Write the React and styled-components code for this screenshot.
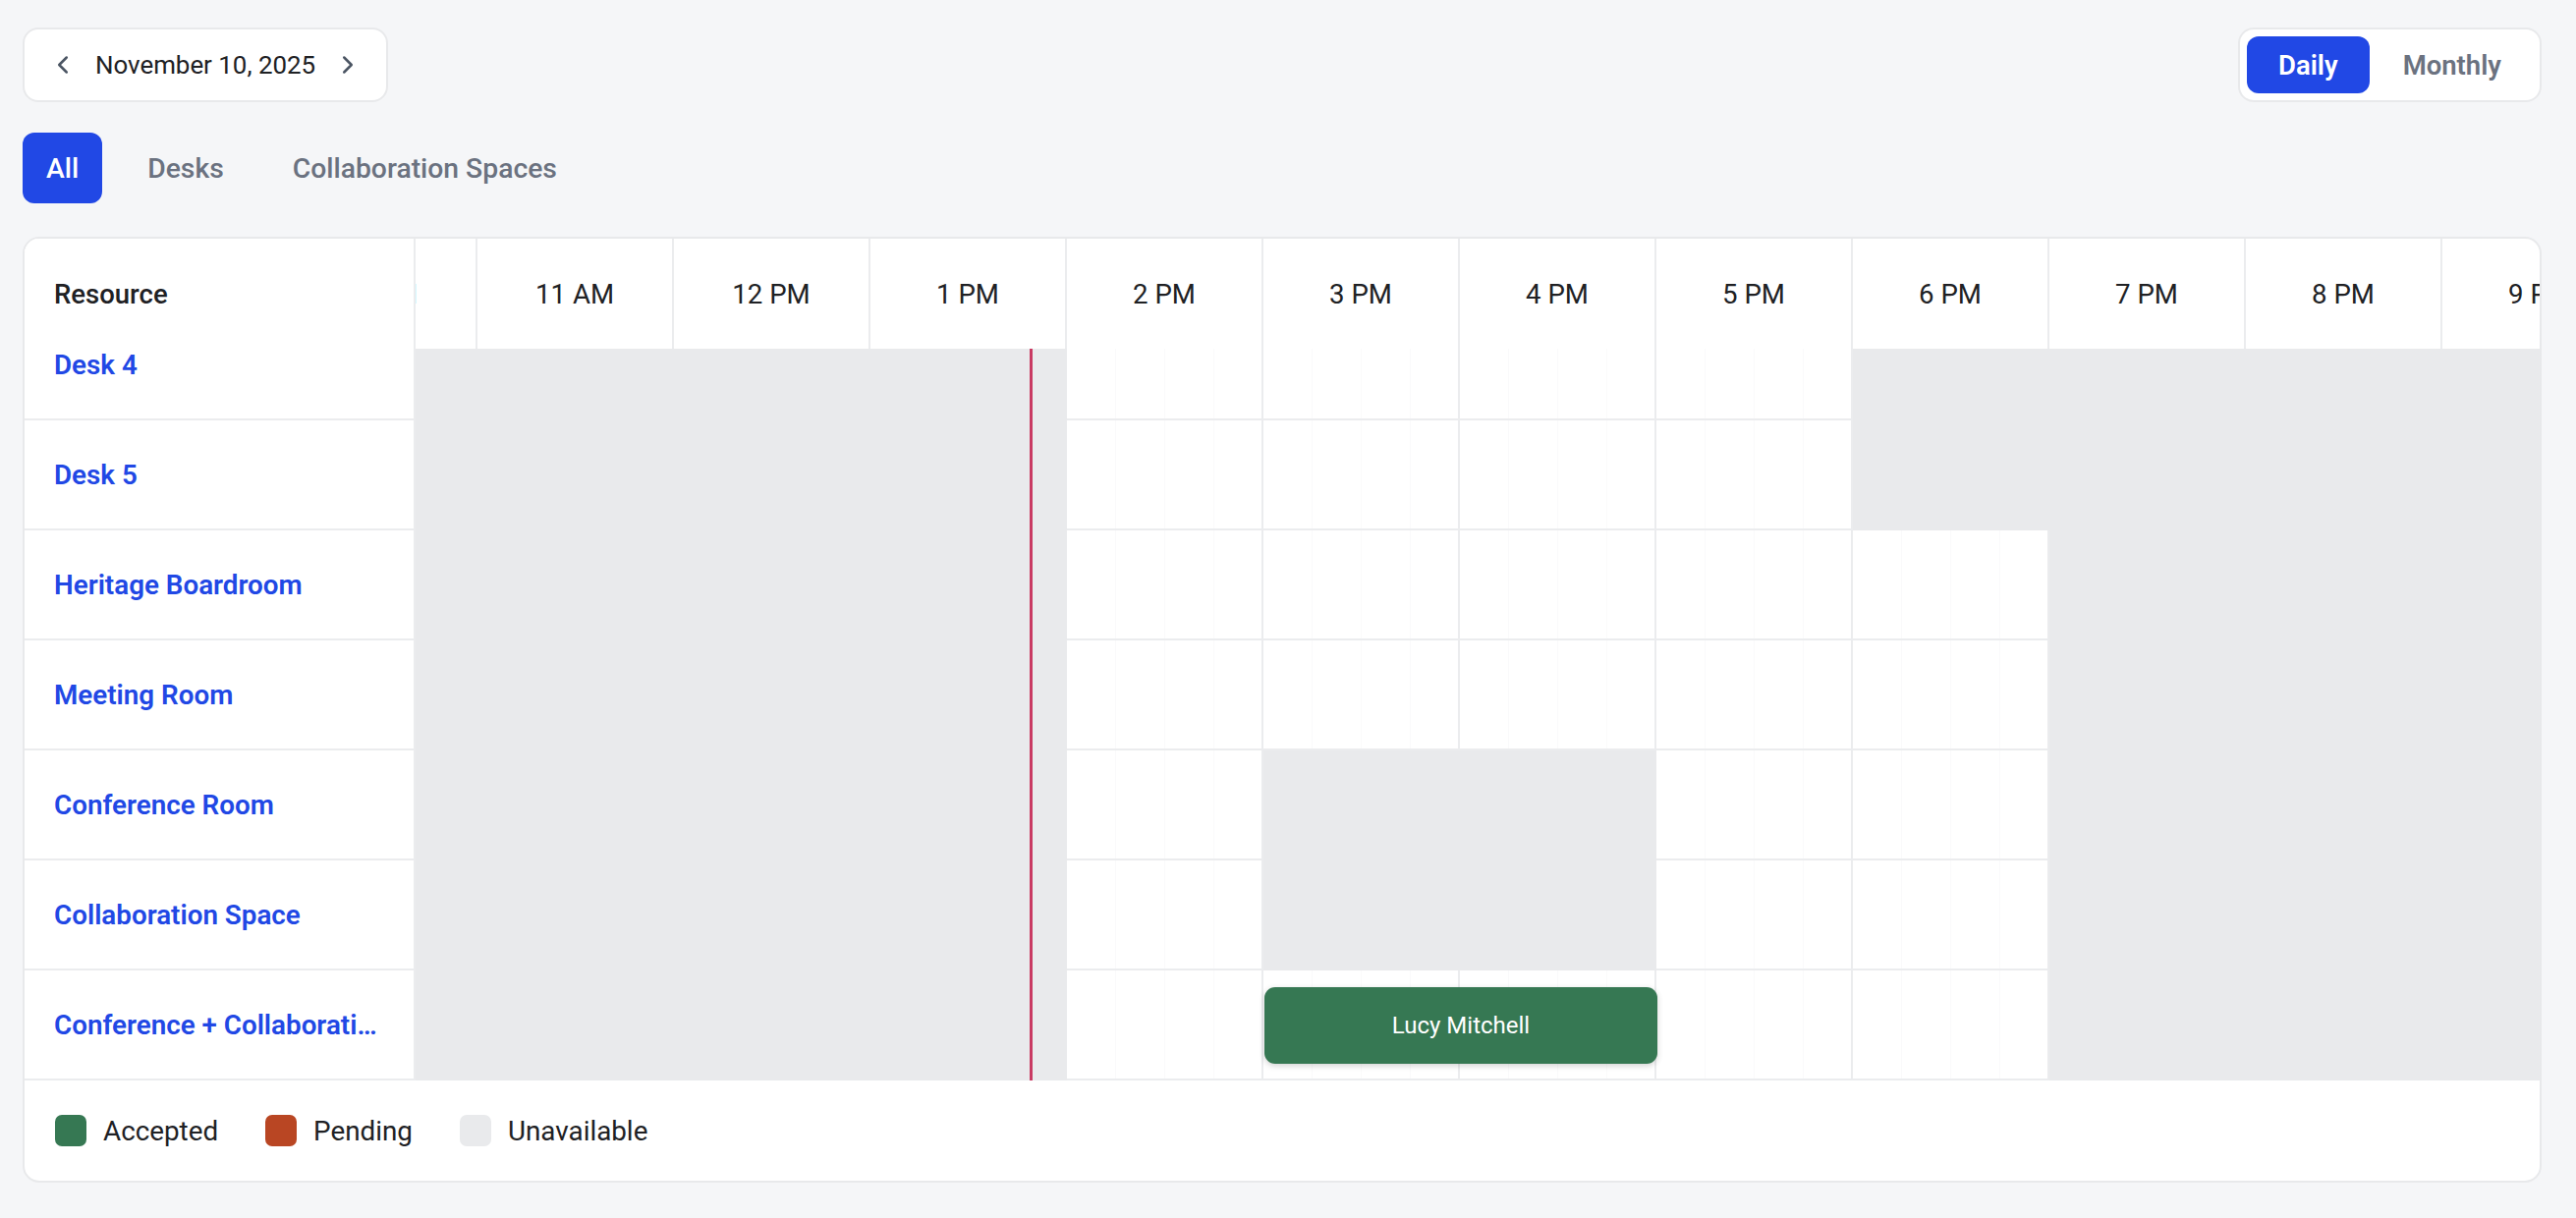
import React, { useLayoutEffect, useRef } from "react";
import styled, { createGlobalStyle } from "styled-components";
import { ChevronLeft, ChevronRight } from "lucide-react";

const HOUR_W = 200;
const NAME_W = 398;
const HEAD_H = 112;
const ROW_H = 112;
const HOURS = Array.from({ length: 24 }, (_, i) => i);
const NOW = 13 + 49 / 60;

const COLORS = {
  blue: "#2148e5",
  gray: "#e9eaec",
  line: "#ebecee",
  text: "#202124",
  muted: "#6b7280",
  green: "#367853",
  orange: "#b94623",
  now: "#c93b63",
};

const Global = createGlobalStyle`
  html, body { margin: 0; padding: 0; background: #f5f6f8; }
  body { font-family: Roboto, "Noto Sans", Arial, sans-serif; color: ${COLORS.text}; }
  * { box-sizing: border-box; }
`;

const Page = styled.div`
  height: 100vh;
  display: flex;
  flex-direction: column;
  padding: 28px 35px 36px 23px;
`;

const Toolbar = styled.div`
  display: flex;
  align-items: center;
  justify-content: space-between;
  height: 76px;
`;

const DateBox = styled.div`
  display: inline-flex;
  align-items: center;
  gap: 18px;
  height: 76px;
  padding: 0 24px;
  background: #fff;
  border: 2px solid #e8e9eb;
  border-radius: 16px;
`;

const IconBtn = styled.button`
  display: flex;
  align-items: center;
  justify-content: center;
  width: 30px;
  height: 30px;
  padding: 0;
  border: 0;
  background: none;
  color: #4b5563;
`;

const DateText = styled.span`
  font-size: 25.9px;
  font-weight: 400;
  color: ${COLORS.text};
  white-space: nowrap;
`;

const Toggle = styled.div`
  display: inline-flex;
  align-items: center;
  gap: 2px;
  height: 76px;
  padding: 7px;
  background: #fff;
  border: 2px solid #e8e9eb;
  border-radius: 16px;
`;

const ToggleBtn = styled.button`
  height: 58px;
  padding: 0 32px;
  border: 0;
  border-radius: 12px;
  font-family: inherit;
  font-size: 27.5px;
  font-weight: 600;
  background: ${(p) => (p.$active ? COLORS.blue : "transparent")};
  color: ${(p) => (p.$active ? "#fff" : COLORS.muted)};
`;

const Tabs = styled.div`
  display: flex;
  gap: 22px;
  margin-top: 31px;
`;

const Tab = styled.button`
  height: 72px;
  padding: 0 24px;
  border: 0;
  border-radius: 12px;
  font-family: inherit;
  font-size: 28.3px;
  font-weight: 500;
  background: ${(p) => (p.$active ? COLORS.blue : "transparent")};
  color: ${(p) => (p.$active ? "#fff" : COLORS.muted)};
`;

const Card = styled.div`
  flex: 1;
  min-height: 0;
  margin-top: 34px;
  display: flex;
  flex-direction: column;
  background: #fff;
  border: 2px solid #e8e9eb;
  border-radius: 17px;
  overflow: hidden;
`;

const Scroller = styled.div`
  flex: 1;
  min-height: 0;
  overflow: auto;
  scrollbar-width: none;
  &::-webkit-scrollbar { display: none; }
`;

const Grid = styled.div`
  width: ${NAME_W + HOURS.length * HOUR_W}px;
`;

const HeaderRow = styled.div`
  position: sticky;
  top: 0;
  z-index: 3;
  display: flex;
  height: ${HEAD_H}px;
  background: #fff;
`;

const Corner = styled.div`
  position: sticky;
  left: 0;
  z-index: 4;
  flex: none;
  width: ${NAME_W}px;
  display: flex;
  align-items: center;
  padding: 0 30px;
  background: #fff;
  border-right: 2px solid ${COLORS.line};
  font-size: 27.5px;
  font-weight: 500;
`;

const HourHead = styled.div`
  flex: none;
  width: ${HOUR_W}px;
  display: flex;
  align-items: center;
  justify-content: center;
  border-right: 2px solid ${COLORS.line};
  font-size: 27.6px;
  white-space: nowrap;
`;

const Body = styled.div`
  position: relative;
`;

const Row = styled.div`
  display: flex;
  height: ${ROW_H}px;
`;

const NameCell = styled.div`
  position: sticky;
  left: 0;
  z-index: 2;
  flex: none;
  width: ${NAME_W}px;
  min-width: 0;
  display: flex;
  align-items: center;
  padding: 0 30px;
  background: #fff;
  border-right: 2px solid ${COLORS.line};
  border-bottom: 2px solid ${COLORS.line};
`;

const NameLink = styled.a`
  min-width: 0;
  color: ${COLORS.blue};
  font-size: 27.8px;
  font-weight: 600;
  text-decoration: none;
  white-space: nowrap;
  overflow: hidden;
  text-overflow: ellipsis;
`;

const Track = styled.div`
  position: relative;
  display: flex;
`;

const Slot = styled.div`
  flex: none;
  width: ${HOUR_W}px;
  height: ${ROW_H}px;
  border-right: 2px solid ${(p) => (p.$off ? COLORS.gray : COLORS.line)};
  border-bottom: 2px solid ${(p) => (p.$off ? COLORS.gray : COLORS.line)};
  background-color: ${(p) => (p.$off ? COLORS.gray : "#fff")};
  background-image: ${(p) =>
    p.$off
      ? "none"
      : "repeating-linear-gradient(to right, transparent 0 49px, #fafafb 49px 50px)"};
`;

const Booking = styled.div`
  position: absolute;
  top: 17px;
  height: 78px;
  z-index: 1;
  display: flex;
  align-items: center;
  justify-content: center;
  border-radius: 11px;
  background: ${(p) => (p.$status === "pending" ? COLORS.orange : COLORS.green)};
  color: #fff;
  font-size: 24px;
  font-weight: 400;
  box-shadow: 0 2px 6px rgba(0, 0, 0, 0.18);
`;

const NowLine = styled.div`
  position: absolute;
  top: 0;
  bottom: 0;
  width: 3px;
  z-index: 1;
  background: ${COLORS.now};
`;

const Legend = styled.div`
  flex: 0 0 102px;
  display: flex;
  align-items: center;
  gap: 48px;
  padding: 0 31px;
`;

const LegendItem = styled.div`
  display: flex;
  align-items: center;
  gap: 17px;
  font-size: 27.8px;
  color: ${COLORS.text};
`;

const Swatch = styled.span`
  width: 32px;
  height: 32px;
  border-radius: 7px;
  background: ${(p) => p.$color};
`;

const fmt = (h) => {
  const suffix = h < 12 ? "AM" : "PM";
  const v = h % 12 === 0 ? 12 : h % 12;
  return `${v} ${suffix}`;
};

const DESK_OPEN = [14, 18];
const SPACE_OPEN = [14, 19];

const resources = [
  { name: "Desk 1", open: DESK_OPEN },
  { name: "Desk 2", open: DESK_OPEN },
  { name: "Desk 3", open: DESK_OPEN },
  { name: "Desk 4", open: DESK_OPEN },
  { name: "Desk 5", open: DESK_OPEN },
  { name: "Heritage Boardroom", open: SPACE_OPEN },
  { name: "Meeting Room", open: SPACE_OPEN },
  { name: "Conference Room", open: SPACE_OPEN, blocked: [15, 17] },
  { name: "Collaboration Space", open: SPACE_OPEN, blocked: [15, 17] },
  {
    name: "Conference + Collaboration Space",
    open: SPACE_OPEN,
    booking: { from: 15, to: 17, who: "Lucy Mitchell", status: "accepted" },
  },
];

const isOff = (r, h) => {
  if (h < r.open[0] || h >= r.open[1]) return true;
  if (r.blocked && h >= r.blocked[0] && h < r.blocked[1]) return true;
  return false;
};

export default function App() {
  const scroller = useRef(null);

  useLayoutEffect(() => {
    const el = scroller.current;
    if (el) {
      el.scrollLeft = 2137;
      el.scrollTop = el.scrollHeight;
    }
  }, []);

  return (
    <>
      <Global />
      <Page>
        <Toolbar>
          <DateBox>
            <IconBtn aria-label="Previous day">
              <ChevronLeft size={30} strokeWidth={2} />
            </IconBtn>
            <DateText>November 10, 2025</DateText>
            <IconBtn aria-label="Next day">
              <ChevronRight size={30} strokeWidth={2} />
            </IconBtn>
          </DateBox>
          <Toggle>
            <ToggleBtn $active>Daily</ToggleBtn>
            <ToggleBtn>Monthly</ToggleBtn>
          </Toggle>
        </Toolbar>

        <Tabs>
          <Tab $active>All</Tab>
          <Tab>Desks</Tab>
          <Tab>Collaboration Spaces</Tab>
        </Tabs>

        <Card>
          <Scroller ref={scroller}>
            <Grid>
              <HeaderRow>
                <Corner>Resource</Corner>
                {HOURS.map((h) => (
                  <HourHead key={h}>{fmt(h)}</HourHead>
                ))}
              </HeaderRow>
              <Body>
                {resources.map((r) => (
                  <Row key={r.name}>
                    <NameCell>
                      <NameLink href="#">{r.name}</NameLink>
                    </NameCell>
                    <Track>
                      {HOURS.map((h) => (
                        <Slot key={h} $off={isOff(r, h)} />
                      ))}
                      {r.booking && (
                        <Booking
                          $status={r.booking.status}
                          style={{
                            left: r.booking.from * HOUR_W + 1,
                            width: (r.booking.to - r.booking.from) * HOUR_W,
                          }}
                        >
                          {r.booking.who}
                        </Booking>
                      )}
                    </Track>
                  </Row>
                ))}
                <NowLine style={{ left: NAME_W + NOW * HOUR_W - 1.5 }} />
              </Body>
            </Grid>
          </Scroller>
          <Legend>
            <LegendItem>
              <Swatch $color={COLORS.green} />
              Accepted
            </LegendItem>
            <LegendItem>
              <Swatch $color={COLORS.orange} />
              Pending
            </LegendItem>
            <LegendItem>
              <Swatch $color={COLORS.gray} />
              Unavailable
            </LegendItem>
          </Legend>
        </Card>
      </Page>
    </>
  );
}
